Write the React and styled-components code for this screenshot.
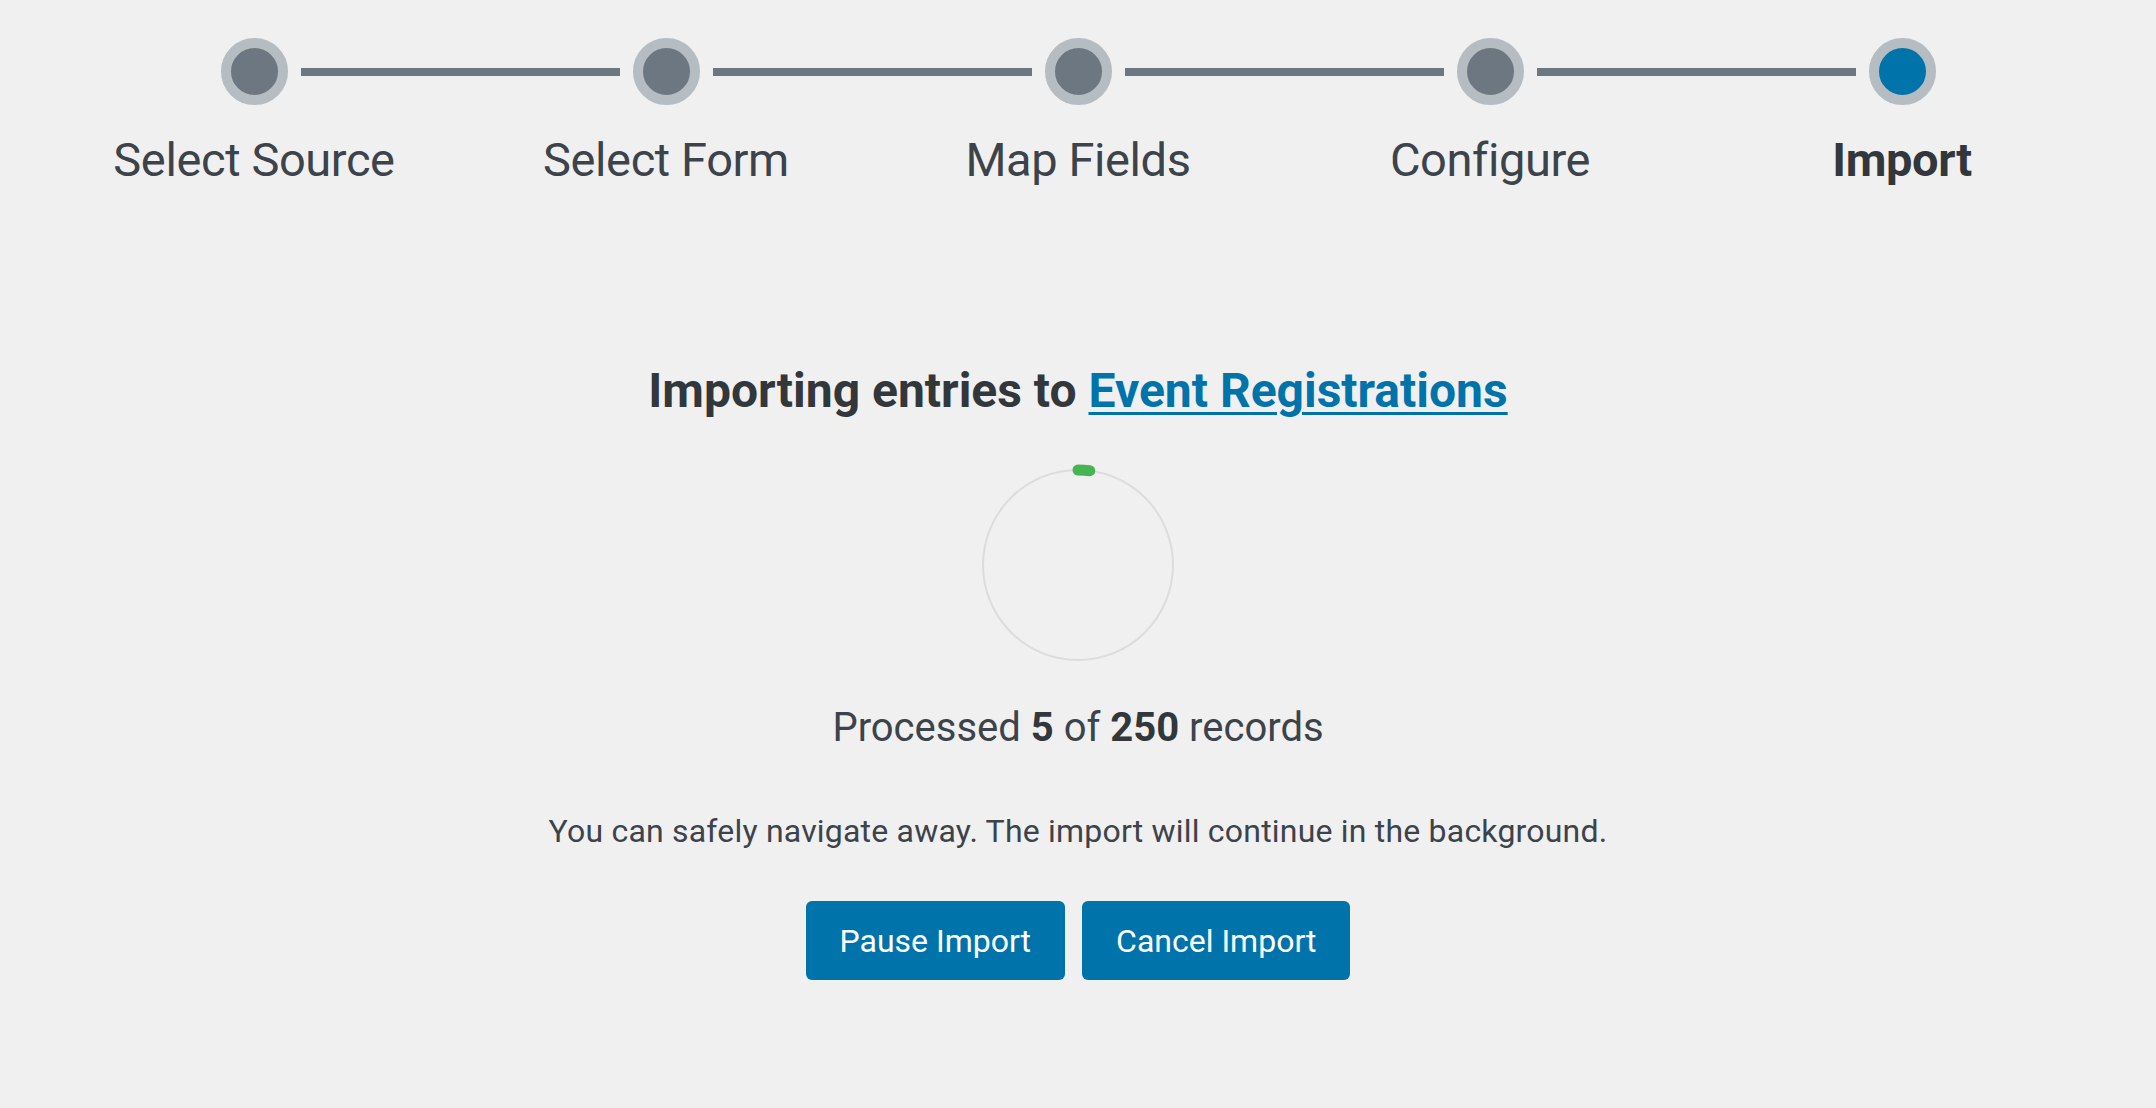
import React from 'react';
import styled, { createGlobalStyle } from 'styled-components';

const GlobalStyle = createGlobalStyle`
  html, body {
    margin: 0;
    padding: 0;
    background: #f0f0f1;
  }
  body {
    font-family: Roboto, "Liberation Sans", Arial, sans-serif;
    color: #3c434a;
  }
`;

const Page = styled.div`
  width: 2156px;
  min-height: 1108px;
  display: flex;
  flex-direction: column;
  align-items: center;
  box-sizing: border-box;
  padding-top: 38px;
`;

const Stepper = styled.div`
  width: 2060px;
  display: flex;
  flex-direction: column;
`;

const Track = styled.div`
  display: flex;
  align-items: center;
  padding: 0 172.5px;
`;

const Dot = styled.div`
  width: 67px;
  height: 67px;
  flex: none;
  box-sizing: border-box;
  border-radius: 50%;
  border: 10px solid #b5bcc2;
  background: ${props => (props.$active ? '#0073aa' : '#6c7781')};
`;

const Connector = styled.div`
  flex: 1;
  height: 8px;
  margin: 0 13px;
  background: #6c7781;
`;

const Labels = styled.div`
  display: grid;
  grid-template-columns: repeat(5, 1fr);
  margin-top: 27px;
`;

const StepLabel = styled.div`
  text-align: center;
  font-size: 47px;
  line-height: 56px;
  font-weight: ${props => (props.$active ? 700 : 400)};
  color: ${props => (props.$active ? '#32373c' : '#3c434a')};
  letter-spacing: -0.4px;
`;

const Heading = styled.h2`
  margin: 174px 0 0;
  font-size: 48px;
  line-height: 58px;
  font-weight: 700;
  color: #32373c;
  letter-spacing: 0;
`;

const FormLink = styled.a`
  color: #0073aa;
  text-decoration: underline;
  text-decoration-thickness: 3px;
  text-underline-offset: 5px;
`;

const Spinner = styled.svg`
  display: block;
  margin-top: 40px;
`;

const Progress = styled.p`
  margin: 34px 0 0;
  font-size: 40px;
  line-height: 48px;
  color: #3c434a;

  b {
    color: #32373c;
    font-weight: 700;
  }
`;

const Note = styled.p`
  margin: 60px 0 0;
  font-size: 32px;
  line-height: 38px;
  letter-spacing: 0.2px;
  color: #3c434a;
`;

const Actions = styled.div`
  display: flex;
  gap: 17px;
  margin-top: 51px;
`;

const Button = styled.button`
  height: 79px;
  padding: 0 34px;
  border: none;
  border-radius: 6px;
  background: #0073aa;
  color: #ffffff;
  font-family: Roboto, "Liberation Sans", Arial, sans-serif;
  font-size: 32px;
  cursor: pointer;
`;

const steps = ['Select Source', 'Select Form', 'Map Fields', 'Configure', 'Import'];

function ProgressRing({ done, total }) {
  const r = 95;
  const circ = 2 * Math.PI * r;
  const len = (done / total) * circ;
  return (
    <Spinner width="210" height="210" viewBox="0 0 210 210">
      <circle cx="105" cy="105" r={r} fill="none" stroke="#dcdcde" strokeWidth="2" />
      <circle
        cx="105"
        cy="105"
        r={r}
        fill="none"
        stroke="#46b450"
        strokeWidth="11"
        strokeLinecap="round"
        strokeDasharray={`${len} ${circ}`}
        transform="rotate(-90 105 105)"
      />
    </Spinner>
  );
}

export default function App() {
  const current = steps.length - 1;
  return (
    <Page>
      <GlobalStyle />
      <Stepper>
        <Track>
          {steps.map((s, i) => (
            <React.Fragment key={s}>
              {i > 0 && <Connector />}
              <Dot $active={i === current} />
            </React.Fragment>
          ))}
        </Track>
        <Labels>
          {steps.map((s, i) => (
            <StepLabel key={s} $active={i === current}>{s}</StepLabel>
          ))}
        </Labels>
      </Stepper>
      <Heading>
        Importing entries to <FormLink href="#">Event Registrations</FormLink>
      </Heading>
      <ProgressRing done={5} total={250} />
      <Progress>
        Processed <b>5</b> of <b>250</b> records
      </Progress>
      <Note>You can safely navigate away. The import will continue in the background.</Note>
      <Actions>
        <Button>Pause Import</Button>
        <Button>Cancel Import</Button>
      </Actions>
    </Page>
  );
}
